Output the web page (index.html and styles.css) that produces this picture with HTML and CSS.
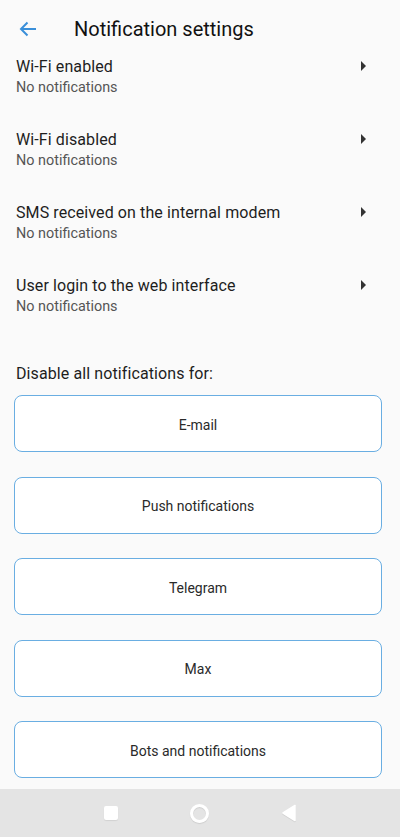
FILE: index.html
```html
<!DOCTYPE html>
<html lang="en">
<head>
  <meta charset="UTF-8" />
  <meta name="viewport" content="width=device-width, initial-scale=1.0" />
  <title>Notification settings</title>
  <link rel="stylesheet" href="styles.css">
</head>
<body>
  <div class="screen">
    <div class="header">
      <svg class="back" width="24" height="24" viewBox="0 0 24 24">
        <path d="M20 12H5.5M11.5 5.5L5 12l6.5 6.5" fill="none" stroke="#3a8fd9" stroke-width="2"/>
      </svg>
      <h1>Notification settings</h1>
    </div>

    <div class="content">
      <div class="item">
        <div class="item-text">
          <div class="item-title">Wi-Fi enabled</div>
          <div class="item-sub">No notifications</div>
        </div>
        <span class="caret"></span>
      </div>
      <div class="item">
        <div class="item-text">
          <div class="item-title">Wi-Fi disabled</div>
          <div class="item-sub">No notifications</div>
        </div>
        <span class="caret"></span>
      </div>
      <div class="item">
        <div class="item-text">
          <div class="item-title">SMS received on the internal modem</div>
          <div class="item-sub">No notifications</div>
        </div>
        <span class="caret"></span>
      </div>
      <div class="item">
        <div class="item-text">
          <div class="item-title">User login to the web interface</div>
          <div class="item-sub">No notifications</div>
        </div>
        <span class="caret"></span>
      </div>

      <div class="section-label">Disable all notifications for:</div>
      <div class="buttons">
        <button class="btn">E-mail</button>
        <button class="btn">Push notifications</button>
        <button class="btn">Telegram</button>
        <button class="btn">Max</button>
        <button class="btn">Bots and notifications</button>
      </div>
    </div>

    <div class="navbar">
      <span class="nav-square"></span>
      <span class="nav-circle"></span>
      <svg class="nav-back" width="16" height="18" viewBox="0 0 16 18">
        <path d="M14 1.5v15L2 9z" fill="#fff" stroke="#fff" stroke-width="1.5" stroke-linejoin="round"/>
      </svg>
    </div>
  </div>
</body>
</html>
```

FILE: styles.css
```css
body {
  margin: 0;
  font-family: Roboto, "Noto Sans", sans-serif;
  background: #fafafa;
  color: #212121;
}
.screen {
  width: 400px;
  height: 837px;
  display: flex;
  flex-direction: column;
  overflow: hidden;
}
.header {
  height: 50px;
  padding-top: 8px;
  box-sizing: border-box;
  display: flex;
  align-items: center;
  flex-shrink: 0;
}
.back {
  margin-left: 16px;
}
h1 {
  margin: 0 0 0 34px;
  font-size: 20px;
  font-weight: 400;
  color: #111;
}
.content {
  flex: 1;
  overflow: hidden;
}
.item {
  height: 73px;
  box-sizing: border-box;
  padding: 7px 34px 0 16px;
  display: flex;
  align-items: flex-start;
  justify-content: space-between;
}
.item-title {
  font-size: 16px;
  line-height: 20px;
  letter-spacing: 0.1px;
  color: #1e1e1e;
}
.item-sub {
  font-size: 14.4px;
  line-height: 20px;
  margin-top: 1px;
  color: #555;
}
.caret {
  width: 0;
  height: 0;
  margin-top: 4px;
  border-top: 5px solid transparent;
  border-bottom: 5px solid transparent;
  border-left: 5px solid #333;
}
.section-label {
  margin: 22px 16px 0;
  font-size: 16px;
  line-height: 20px;
  letter-spacing: 0.1px;
  color: #1e1e1e;
}
.buttons {
  padding: 11px 18px 0 14px;
  display: flex;
  flex-direction: column;
  gap: 24.5px;
}
.btn {
  height: 57px;
  padding-top: 3px;
  background: #fff;
  border: 1.5px solid #6aaee2;
  border-radius: 8px;
  font-family: Roboto, "Noto Sans", sans-serif;
  font-size: 14px;
  color: #2a2a2a;
}
.navbar {
  height: 48px;
  flex-shrink: 0;
  background: #e4e4e4;
  display: flex;
  align-items: center;
  justify-content: center;
  gap: 72px;
}
.nav-square {
  width: 14px;
  height: 14px;
  background: #fff;
  border-radius: 2px;
  box-shadow: 0 1px 1px rgba(0, 0, 0, 0.08);
}
.nav-circle {
  width: 13px;
  height: 13px;
  border: 3px solid #fff;
  border-radius: 50%;
  box-shadow: 0 1px 1px rgba(0, 0, 0, 0.1), inset 0 1px 1px rgba(0, 0, 0, 0.1);
}
.nav-back {
  filter: drop-shadow(0 1px 0.5px rgba(0, 0, 0, 0.08));
}
```
